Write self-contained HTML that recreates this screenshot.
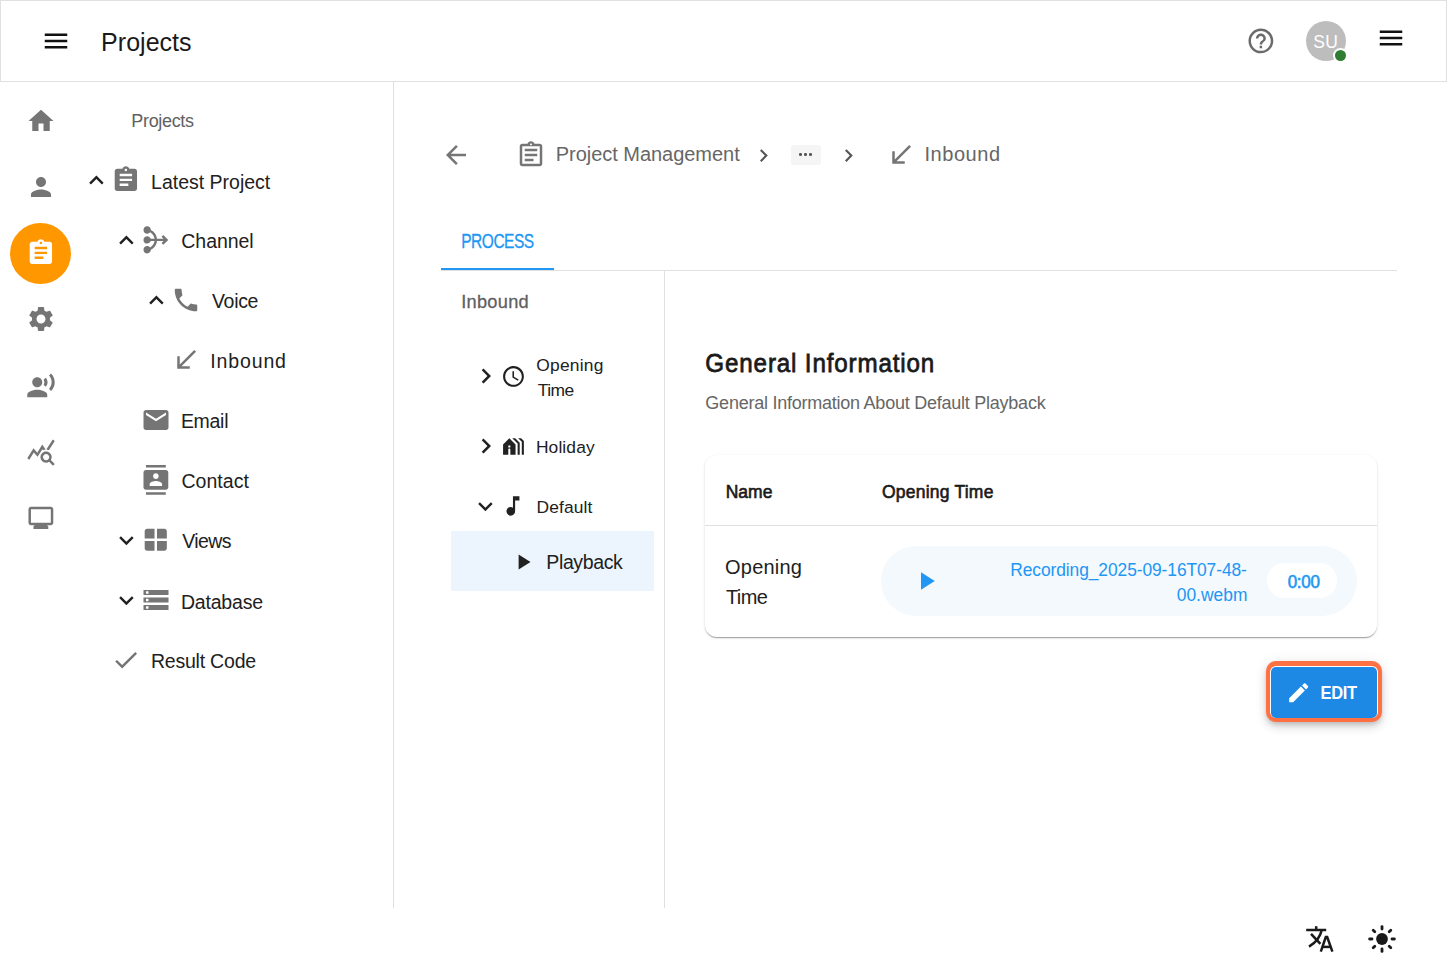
<!DOCTYPE html><html><head><meta charset="utf-8"><title>Projects</title><style>
html,body{margin:0;padding:0;background:#fff;}
body{width:1447px;height:970px;position:relative;overflow:hidden;font-family:"Liberation Sans", sans-serif;}
.t{position:absolute;line-height:1;white-space:nowrap;}
</style></head><body>
<div style="position:absolute;left:0;top:0;width:1447px;height:82px;box-sizing:border-box;border:1px solid #e0e0e0;background:#fff"></div>
<div style="position:absolute;left:393px;top:82px;width:1px;height:826px;background:#e0e0e0;"></div>
<div style="position:absolute;left:441px;top:270px;width:956px;height:1px;background:#e0e0e0;"></div>
<div style="position:absolute;left:441px;top:268px;width:113px;height:2px;background:#2196F3;"></div>
<div style="position:absolute;left:664px;top:271px;width:1px;height:637px;background:#e0e0e0;"></div>
<svg style="position:absolute;left:41.10px;top:25.90px;width:30.00px;height:30.00px" viewBox="0 0 24 24"><path fill="#111" d="M3 18h18v-2H3v2zm0-5h18v-2H3v2zm0-7v2h18V6H3z"/></svg>
<svg style="position:absolute;left:1246.02px;top:26.02px;width:29.76px;height:29.76px" viewBox="0 0 24 24"><path fill="#6b6b6b" d="M11 18h2v-2h-2v2zm1-16C6.48 2 2 6.48 2 12s4.48 10 10 10 10-4.48 10-10S17.52 2 12 2zm0 18c-4.41 0-8-3.59-8-8s3.59-8 8-8 8 3.59 8 8-3.59 8-8 8zm0-14c-2.21 0-4 1.79-4 4h2c0-1.1.9-2 2-2s2 .9 2 2c0 2-3 1.75-3 5h2c0-2.25 3-2.5 3-5 0-2.21-1.79-4-4-4z"/></svg>
<div style="position:absolute;left:1306px;top:21px;width:40px;height:40px;border-radius:50%;background:#bdbdbd"></div>
<div style="position:absolute;left:1332.5px;top:47.8px;width:15px;height:15px;border-radius:50%;background:#fff"></div>
<div style="position:absolute;left:1334.5px;top:49.8px;width:11px;height:11px;border-radius:50%;background:#2e7d32"></div>
<svg style="position:absolute;left:1376.10px;top:22.90px;width:30.00px;height:30.00px" viewBox="0 0 24 24"><path fill="#111" d="M3 18h18v-2H3v2zm0-5h18v-2H3v2zm0-7v2h18V6H3z"/></svg>
<svg style="position:absolute;left:26.00px;top:105.80px;width:30.00px;height:30.00px" viewBox="0 0 24 24"><path fill="#757575" d="M10 20v-6h4v6h5v-8h3L12 3 2 12h3v8z"/></svg>
<svg style="position:absolute;left:26.00px;top:171.90px;width:30.00px;height:30.00px" viewBox="0 0 24 24"><path fill="#757575" d="M12 12c2.21 0 4-1.79 4-4s-1.79-4-4-4-4 1.79-4 4 1.79 4 4 4zm0 2c-2.67 0-8 1.34-8 4v2h16v-2c0-2.66-5.33-4-8-4z"/></svg>
<div style="position:absolute;left:9.9px;top:222.9px;width:61px;height:61px;border-radius:50%;background:#FF9800"></div>
<svg style="position:absolute;left:26.12px;top:238.12px;width:29.76px;height:29.76px" viewBox="0 0 24 24"><path fill="#fff" d="M19 3h-4.18C14.4 1.84 13.3 1 12 1c-1.3 0-2.4.84-2.82 2H5c-1.1 0-2 .9-2 2v14c0 1.1.9 2 2 2h14c1.1 0 2-.9 2-2V5c0-1.1-.9-2-2-2zm-7 0c.55 0 1 .45 1 1s-.45 1-1 1-1-.45-1-1 .45-1 1-1zm2 14H7v-2h7v2zm3-4H7v-2h10v2zm0-4H7V7h10v2z"/></svg>
<svg style="position:absolute;left:26.00px;top:303.80px;width:30.00px;height:30.00px" viewBox="0 0 24 24"><path fill="#757575" d="M19.14 12.94c.04-.3.06-.61.06-.94 0-.32-.02-.64-.07-.94l2.03-1.58c.18-.14.23-.41.12-.61l-1.92-3.32c-.12-.22-.37-.29-.59-.22l-2.39.96c-.5-.38-1.03-.7-1.62-.94l-.36-2.54c-.04-.24-.24-.41-.48-.41h-3.84c-.24 0-.43.17-.47.41l-.36 2.54c-.59.24-1.13.57-1.62.94l-2.39-.96c-.22-.08-.47 0-.59.22L2.74 8.87c-.12.21-.08.47.12.61l2.03 1.58c-.05.3-.09.63-.09.94s.02.64.07.94l-2.03 1.58c-.18.14-.23.41-.12.61l1.920 3.32c.12.22.37.29.59.22l2.39-.96c.5.38 1.03.7 1.62.94l.36 2.54c.05.24.24.41.48.41h3.84c.24 0 .44-.17.47-.41l.36-2.54c.59-.24 1.13-.56 1.62-.94l2.39.96c.22.08.47 0 .59-.22l1.92-3.32c.12-.22.07-.47-.12-.61l-2.01-1.58zM12 15.6c-1.98 0-3.6-1.62-3.6-3.6s1.62-3.6 3.6-3.6 3.6 1.62 3.6 3.6-1.62 3.6-3.6 3.6z"/></svg>
<svg style="position:absolute;left:25.90px;top:371.40px;width:30.00px;height:30.00px" viewBox="0 0 24 24"><path fill="#757575" d="M9 13c2.21 0 4-1.79 4-4s-1.79-4-4-4-4 1.79-4 4 1.79 4 4 4zm0 2c-2.67 0-8 1.34-8 4v2h16v-2c0-2.66-5.33-4-8-4zm6.76-9.64l-1.68 1.69c.84 1.18.84 2.71 0 3.89l1.68 1.69c2.02-2.02 2.02-5.07 0-7.27zM20.07 2l-1.63 1.63c2.77 3.02 2.77 7.56 0 10.74L20.07 16c3.9-3.89 3.91-9.95 0-14z"/></svg>
<svg style="position:absolute;left:26.00px;top:436.90px;width:30.00px;height:30.00px" viewBox="0 0 24 24"><path fill="#757575" d="M19.88 18.47c.44-.7.7-1.51.7-2.39 0-2.49-2.01-4.5-4.5-4.5s-4.5 2.01-4.5 4.5 2.01 4.5 4.49 4.5c.88 0 1.7-.26 2.39-.7L21.58 23 23 21.58l-3.12-3.11zm-3.8.11c-1.38 0-2.5-1.12-2.5-2.5s1.12-2.5 2.5-2.5 2.5 1.12 2.5 2.5-1.12 2.5-2.5 2.5zm-.36-8.5c-.74.02-1.45.18-2.1.45l-.55-.83-3.8 6.18-3.01-3.52-3.630 5.81L1 17l5-8 3 3.5L13 6l2.72 4.08zm2.59.5c-.64-.28-1.33-.45-2.05-.49L21.38 2 23 3.18l-4.69 7.4z"/></svg>
<svg style="position:absolute;left:26.12px;top:502.92px;width:29.76px;height:29.76px" viewBox="0 0 24 24"><path fill="#757575" d="M20 3H4c-1.1 0-2 .9-2 2v11c0 1.1.9 2 2 2h3l-1 1v2h12v-2l-1-1h3c1.1 0 2-.9 2-2V5c0-1.1-.9-2-2-2zm0 13H4V5h16v11z"/></svg>
<svg style="position:absolute;left:81.50px;top:165.80px;width:28.80px;height:28.80px" viewBox="0 0 24 24"><path fill="#212121" d="M12 8l-6 6 1.41 1.41L12 10.83l4.59 4.58L18 14z"/></svg>
<svg style="position:absolute;left:111.02px;top:165.22px;width:29.76px;height:29.76px" viewBox="0 0 24 24"><path fill="#757575" d="M19 3h-4.18C14.4 1.84 13.3 1 12 1c-1.3 0-2.4.84-2.82 2H5c-1.1 0-2 .9-2 2v14c0 1.1.9 2 2 2h14c1.1 0 2-.9 2-2V5c0-1.1-.9-2-2-2zm-7 0c.55 0 1 .45 1 1s-.45 1-1 1-1-.45-1-1 .45-1 1-1zm2 14H7v-2h7v2zm3-4H7v-2h10v2zm0-4H7V7h10v2z"/></svg>
<svg style="position:absolute;left:111.60px;top:225.80px;width:28.80px;height:28.80px" viewBox="0 0 24 24"><path fill="#212121" d="M12 8l-6 6 1.41 1.41L12 10.83l4.59 4.58L18 14z"/></svg>
<svg style="position:absolute;left:140.87px;top:225.32px;width:29.76px;height:29.76px" viewBox="0 0 24 24"><path fill="#757575" d="M22 12l-4 4-1.41-1.41L18.17 13h-5.23c-.34 3.1-2.26 5.72-4.94 7.05C7.96 21.69 6.64 23 5 23c-1.66 0-3-1.34-3-3s1.34-3 3-3c.95 0 1.78.45 2.33 1.14 1.9-1.03 3.26-2.91 3.58-5.14h-3.1C7.4 14.16 6.3 15 5 15c-1.66 0-3-1.34-3-3s1.34-3 3-3c1.3 0 2.4.84 2.82 2h3.1c-.32-2.23-1.69-4.1-3.59-5.14C6.78 6.55 5.95 7 5 7 3.34 7 2 5.66 2 4s1.34-3 3-3c1.64 0 2.96 1.31 2.99 2.95 2.68 1.33 4.6 3.95 4.94 7.05h5.23l-1.58-1.59L18 8l4 4z"/></svg>
<svg style="position:absolute;left:141.60px;top:285.80px;width:28.80px;height:28.80px" viewBox="0 0 24 24"><path fill="#212121" d="M12 8l-6 6 1.41 1.41L12 10.83l4.59 4.58L18 14z"/></svg>
<svg style="position:absolute;left:171.00px;top:284.90px;width:30.00px;height:30.00px" viewBox="0 0 24 24"><path fill="#757575" d="M6.62 10.79c1.44 2.83 3.76 5.14 6.59 6.59l2.2-2.2c.27-.27.67-.36 1.02-.24 1.12.37 2.33.57 3.57.57.55 0 1 .45 1 1V20c0 .55-.45 1-1 1-9.39 0-17-7.61-17-17 0-.55.45-1 1-1h3.5c.55 0 1 .45 1 1 0 1.25.2 2.450.57 3.57.11.35.03.74-.25 1.02l-2.2 2.2z"/></svg>
<svg style="position:absolute;left:170.60px;top:345.40px;width:30.00px;height:30.00px" viewBox="0 0 24 24"><path fill="#757575" d="M20 5.41L18.59 4 7 15.59V9H5v10h10v-2H8.41z"/></svg>
<svg style="position:absolute;left:140.90px;top:404.90px;width:30.00px;height:30.00px" viewBox="0 0 24 24"><path fill="#757575" d="M20 4H4c-1.1 0-1.99.9-1.99 2L2 18c0 1.1.9 2 2 2h16c1.1 0 2-.9 2-2V6c0-1.1-.9-2-2-2zm0 4l-8 5-8-5V6l8 5 8-5v2z"/></svg>
<svg style="position:absolute;left:140.87px;top:465.02px;width:29.76px;height:29.76px" viewBox="0 0 24 24"><path fill="#757575" d="M20 0H4v2h16V0zM4 24h16v-2H4v2zM20 4H4c-1.1 0-2 .9-2 2v12c0 1.1.9 2 2 2h16c1.1 0 2-.9 2-2V6c0-1.1-.9-2-2-2zm-8 2.75c1.24 0 2.25 1.01 2.25 2.25s-1.01 2.25-2.25 2.25S9.75 10.24 9.75 9 10.76 6.75 12 6.75zM17 17H7v-1.5c0-1.67 3.33-2.5 5-2.5s5 .83 5 2.5V17z"/></svg>
<svg style="position:absolute;left:111.60px;top:526.00px;width:28.80px;height:28.80px" viewBox="0 0 24 24"><path fill="#212121" d="M16.59 8.59L12 13.17 7.41 8.59 6 10l6 6 6-6z"/></svg>
<svg style="position:absolute;left:141.24px;top:525.24px;width:29.52px;height:29.52px" viewBox="0 0 24 24"><path fill="#757575" d="M11 11V3H5c-1.1 0-2 .9-2 2v6h8zm2 0h8V5c0-1.1-.9-2-2-2h-6v8zm-2 2H3v6c0 1.1.9 2 2 2h6v-8zm2 0v8h6c1.1 0 2-.9 2-2v-6h-8z"/></svg>
<svg style="position:absolute;left:111.60px;top:586.00px;width:28.80px;height:28.80px" viewBox="0 0 24 24"><path fill="#212121" d="M16.59 8.59L12 13.17 7.41 8.59 6 10l6 6 6-6z"/></svg>
<svg style="position:absolute;left:140.90px;top:584.85px;width:30.00px;height:30.00px" viewBox="0 0 24 24"><path fill="#757575" d="M2 20h20v-4H2v4zm2-3h2v2H4v-2zM2 4v4h20V4H2zm4 3H4V5h2v2zM2 14h20v-4H2v4zm2-3h2v2H4v-2z"/></svg>
<svg style="position:absolute;left:111.02px;top:645.12px;width:29.76px;height:29.76px" viewBox="0 0 24 24"><path fill="#757575" d="M9 16.17L4.83 12l-1.42 1.41L9 19 21 7l-1.41-1.41z"/></svg>
<svg style="position:absolute;left:441.00px;top:140.00px;width:30.00px;height:30.00px" viewBox="0 0 24 24"><path fill="#757575" d="M20 11H7.83l5.59-5.59L12 4l-8 8 8 8 1.41-1.41L7.83 13H20v-2z"/></svg>
<svg style="position:absolute;left:515.90px;top:140.00px;width:30.00px;height:30.00px" viewBox="0 0 24 24"><path fill="#757575" d="M7 15h7v2H7zm0-4h10v2H7zm0-4h10v2H7zm12-4h-4.18C14.4 1.84 13.3 1 12 1c-1.3 0-2.4.84-2.82 2H5c-1.1 0-2 .9-2 2v14c0 1.1.9 2 2 2h14c1.1 0 2-.9 2-2V5c0-1.1-.9-2-2-2zm-7-.25c.41 0 .75.34.75.75s-.34.75-.75.75-.75-.34-.75-.75.34-.75.75-.75zM19 19H5V5h14v14z"/></svg>
<svg style="position:absolute;left:750.90px;top:143.30px;width:25.20px;height:25.20px" viewBox="0 0 24 24"><path fill="#555" d="M10 6L8.59 7.41 13.17 12l-4.58 4.59L10 18l6-6z"/></svg>
<div style="position:absolute;left:791px;top:145px;width:30px;height:20px;border-radius:3px;background:#f5f5f5"></div>
<div style="position:absolute;left:799.25px;top:153.3px;width:2.6px;height:2.6px;border-radius:50%;background:#555"></div>
<div style="position:absolute;left:804.25px;top:153.3px;width:2.6px;height:2.6px;border-radius:50%;background:#555"></div>
<div style="position:absolute;left:809.25px;top:153.3px;width:2.6px;height:2.6px;border-radius:50%;background:#555"></div>
<svg style="position:absolute;left:835.50px;top:143.30px;width:25.20px;height:25.20px" viewBox="0 0 24 24"><path fill="#555" d="M10 6L8.59 7.41 13.17 12l-4.58 4.59L10 18l6-6z"/></svg>
<svg style="position:absolute;left:885.60px;top:140.30px;width:30.00px;height:30.00px" viewBox="0 0 24 24"><path fill="#757575" d="M20 5.41L18.59 4 7 15.59V9H5v10h10v-2H8.41z"/></svg>
<div style="position:absolute;left:451px;top:531px;width:203px;height:60px;background:#ECF5FD;"></div>
<svg style="position:absolute;left:471.10px;top:360.60px;width:30.00px;height:30.00px" viewBox="0 0 24 24"><path fill="#212121" d="M10 6L8.59 7.41 13.17 12l-4.58 4.59L10 18l6-6z"/></svg>
<svg style="position:absolute;left:501.02px;top:363.87px;width:24.96px;height:24.96px" viewBox="0 0 24 24"><path fill="#212121" d="M11.99 2C6.47 2 2 6.48 2 12s4.47 10 9.99 10C17.52 22 22 17.52 22 12S17.52 2 11.99 2zM12 20c-4.42 0-8-3.58-8-8s3.58-8 8-8 8 3.58 8 8-3.58 8-8 8zm.5-13H11v6l5.25 3.15.75-1.23-4.5-2.67z"/></svg>
<svg style="position:absolute;left:471.10px;top:431.00px;width:30.00px;height:30.00px" viewBox="0 0 24 24"><path fill="#212121" d="M10 6L8.59 7.41 13.17 12l-4.58 4.59L10 18l6-6z"/></svg>
<svg style="position:absolute;left:501.02px;top:433.92px;width:24.96px;height:24.96px" viewBox="0 0 24 24"><path fill="#212121" d="M8 4l-6 6v10h5v-5c0-.55.45-1 1-1s1 .45 1 1v5h5V10L8 4zm1 9H7v-2h2v2zm9 7V8.35L13.65 4h-2.83L16 9.18V20h2zm4 0V6.69L19.31 4h-2.83L20 7.52V20h2z"/></svg>
<svg style="position:absolute;left:471.35px;top:491.60px;width:28.80px;height:28.80px" viewBox="0 0 24 24"><path fill="#212121" d="M16.59 8.59L12 13.17 7.41 8.59 6 10l6 6 6-6z"/></svg>
<svg style="position:absolute;left:500.34px;top:493.44px;width:25.92px;height:25.92px" viewBox="0 0 24 24"><path fill="#212121" d="M12 3v10.55c-.59-.34-1.27-.55-2-.55-2.21 0-4 1.79-4 4s1.79 4 4 4 4-1.79 4-4V7h4V3h-6z"/></svg>
<svg style="position:absolute;left:510.34px;top:548.54px;width:25.92px;height:25.92px" viewBox="0 0 24 24"><path fill="#212121" d="M8 5v14l11-7z"/></svg>
<div style="position:absolute;left:705px;top:455px;width:672px;height:182px;border-radius:12px;background:#fff;box-shadow:0px 2px 1px -1px rgba(0,0,0,0.2),0px 1px 1px 0px rgba(0,0,0,0.14),0px 1px 3px 0px rgba(0,0,0,0.12)"></div>
<div style="position:absolute;left:705px;top:525px;width:672px;height:1px;background:#e0e0e0;"></div>
<div style="position:absolute;left:881px;top:546px;width:476px;height:70px;border-radius:35px;background:#F4F9FD"></div>
<svg style="position:absolute;left:911.00px;top:565.95px;width:30.00px;height:30.00px" viewBox="0 0 24 24"><path fill="#2196F3" d="M8 5v14l11-7z"/></svg>
<div style="position:absolute;left:1267px;top:563.3px;width:70px;height:34.3px;border-radius:17px;background:#fff"></div>
<div style="position:absolute;left:1266px;top:661px;width:116px;height:61px;box-sizing:border-box;border-radius:10px;background:#FF7043;box-shadow:0px 3px 5px -1px rgba(0,0,0,0.16),0px 6px 10px 0px rgba(0,0,0,0.10),0px 1px 14px 0px rgba(0,0,0,0.08)"></div>
<div style="position:absolute;left:1270px;top:666px;width:108px;height:52px;border-radius:6px;background:#fff"></div>
<div style="position:absolute;left:1271px;top:667px;width:106px;height:50.5px;border-radius:5px;background:#1E88E5"></div>
<svg style="position:absolute;left:1285.68px;top:679.68px;width:25.44px;height:25.44px" viewBox="0 0 24 24"><path fill="#fff" d="M3 17.25V21h3.75L17.81 9.94l-3.75-3.75L3 17.25zM20.71 7.04c.39-.39.39-1.02 0-1.41l-2.34-2.34c-.39-.39-1.02-.39-1.41 0l-1.83 1.83 3.75 3.75 1.83-1.83z"/></svg>
<svg style="position:absolute;left:1304px;top:924px;width:32px;height:30px" viewBox="0 0 32 30">
<g fill="none" stroke="#1a1a1a" stroke-width="2.5" stroke-linecap="butt" stroke-linejoin="miter">
<path d="M2.2 6h20"/><path d="M12.2 2.2v3.8"/>
<path d="M17.6 6.2C16.6 11.5 12.5 18 5 22.6"/>
<path d="M7 9.9l9.4 10"/>
<path d="M16.8 27.6l5-14.6h1.4l5.2 14.6"/><path d="M18.6 22.9h8.2"/>
</g></svg>
<svg style="position:absolute;left:1366px;top:923px;width:32px;height:32px" viewBox="0 0 32 32">
<circle cx="16" cy="16" r="5.9" fill="#1a1a1a"/>
<g stroke="#1a1a1a" stroke-width="2.8" stroke-linecap="round">
<path d="M16 3.6v2.4"/><path d="M16 26v2.4"/><path d="M3.6 16h2.4"/><path d="M26 16h2.4"/>
<path d="M7.2 7.2l1.6 1.6"/><path d="M23.2 23.2l1.6 1.6"/><path d="M7.2 24.8l1.6-1.6"/><path d="M23.2 8.8l1.6-1.6"/>
</g></svg>
<div class="t" style="left:101.08px;top:30.46px;font-size:25px;font-weight:400;letter-spacing:0.025px;color:#1a1a1a;">Projects</div>
<div class="t" style="left:131.36px;top:111.88px;font-size:18px;font-weight:400;letter-spacing:-0.337px;color:#616161;transform:scaleY(1.06);transform-origin:0 15px;">Projects</div>
<div class="t" style="left:151.08px;top:172.76px;font-size:19.5px;font-weight:400;letter-spacing:-0.006px;color:#212121;">Latest Project</div>
<div class="t" style="left:181.36px;top:231.9px;font-size:19.5px;font-weight:400;letter-spacing:-0.077px;color:#212121;">Channel</div>
<div class="t" style="left:212.0px;top:292.26px;font-size:19.5px;font-weight:400;letter-spacing:-0.315px;color:#212121;">Voice</div>
<div class="t" style="left:210.36px;top:351.9px;font-size:19.5px;font-weight:400;letter-spacing:0.847px;color:#212121;">Inbound</div>
<div class="t" style="left:180.9px;top:412.26px;font-size:19.5px;font-weight:400;letter-spacing:-0.295px;color:#212121;">Email</div>
<div class="t" style="left:181.44px;top:472.14px;font-size:19.5px;font-weight:400;letter-spacing:0.05px;color:#212121;">Contact</div>
<div class="t" style="left:182.36px;top:532.2px;font-size:19.5px;font-weight:400;letter-spacing:-0.655px;color:#212121;">Views</div>
<div class="t" style="left:180.9px;top:592.56px;font-size:19.5px;font-weight:400;letter-spacing:-0.18px;color:#212121;">Database</div>
<div class="t" style="left:150.9px;top:652.38px;font-size:19.5px;font-weight:400;letter-spacing:-0.208px;color:#212121;">Result Code</div>
<div class="t" style="left:555.8px;top:144.02px;font-size:20px;font-weight:400;letter-spacing:-0.036px;color:#666666;">Project Management</div>
<div class="t" style="left:924.54px;top:143.74px;font-size:20px;font-weight:400;letter-spacing:0.534px;color:#666666;">Inbound</div>
<div class="t" style="left:461.28px;top:234.52px;font-size:15.5px;font-weight:400;letter-spacing:-0.484px;color:#2196F3;-webkit-text-stroke:0.25px #2196F3;transform:scaleY(1.25);transform-origin:0 13px;">PROCESS</div>
<div class="t" style="left:461.18px;top:292.64px;font-size:18.2px;font-weight:400;letter-spacing:0.304px;color:#5f5f5f;-webkit-text-stroke:0.3px #5f5f5f;">Inbound</div>
<div class="t" style="left:536.26px;top:356.52px;font-size:17.4px;font-weight:400;letter-spacing:0.243px;color:#212121;">Opening</div>
<div class="t" style="left:537.72px;top:381.7px;font-size:17.4px;font-weight:400;letter-spacing:-0.48px;color:#212121;">Time</div>
<div class="t" style="left:535.92px;top:438.76px;font-size:17.4px;font-weight:400;letter-spacing:0.12px;color:#212121;">Holiday</div>
<div class="t" style="left:536.54px;top:499.12px;font-size:17.4px;font-weight:400;letter-spacing:0.106px;color:#212121;">Default</div>
<div class="t" style="left:546.34px;top:553.12px;font-size:19.5px;font-weight:400;letter-spacing:-0.385px;color:#212121;">Playback</div>
<div class="t" style="left:705.36px;top:352.24px;font-size:24.2px;font-weight:400;letter-spacing:0.843px;color:#1a1a1a;-webkit-text-stroke:0.7px #1a1a1a;transform:scaleY(1.09);transform-origin:0 20px;">General Information</div>
<div class="t" style="left:705.36px;top:394.42px;font-size:18px;font-weight:400;letter-spacing:-0.242px;color:#666666;transform:scaleY(1.04);transform-origin:0 15px;">General Information About Default Playback</div>
<div class="t" style="left:725.72px;top:484.24px;font-size:17.5px;font-weight:400;letter-spacing:0.0px;color:#1a1a1a;-webkit-text-stroke:0.6px #1a1a1a;transform:scaleY(1.08);transform-origin:0 14px;">Name</div>
<div class="t" style="left:882.0px;top:484.24px;font-size:17.5px;font-weight:400;letter-spacing:0.223px;color:#1a1a1a;-webkit-text-stroke:0.6px #1a1a1a;transform:scaleY(1.08);transform-origin:0 14px;">Opening Time</div>
<div class="t" style="left:725.0px;top:557.4px;font-size:20px;font-weight:400;letter-spacing:0.227px;color:#212121;">Opening</div>
<div class="t" style="left:725.92px;top:587.34px;font-size:20px;font-weight:400;letter-spacing:-0.547px;color:#212121;">Time</div>
<div class="t" style="left:1010.28px;top:562.48px;font-size:17.4px;font-weight:400;letter-spacing:-0.084px;color:#2196F3;transform:scaleY(1.08);transform-origin:0 14px;">Recording_2025-09-16T07-48-</div>
<div class="t" style="left:1176.72px;top:587.2px;font-size:17.4px;font-weight:400;letter-spacing:0.03px;color:#2196F3;transform:scaleY(1.08);transform-origin:0 14px;">00.webm</div>
<div class="t" style="left:1287.7px;top:573.9px;font-size:17px;font-weight:400;letter-spacing:-0.3px;color:#2196F3;-webkit-text-stroke:0.55px #2196F3;transform:scaleY(1.06);transform-origin:0 14px;">0:00</div>
<div class="t" style="left:1320.46px;top:685.08px;font-size:16.5px;font-weight:700;letter-spacing:-0.307px;color:#ffffff;transform:scaleY(1.11);transform-origin:0 14px;">EDIT</div>
<div class="t" style="left:1313.28px;top:34.3px;font-size:17.5px;font-weight:400;letter-spacing:0.2px;color:#ffffff;transform:scaleY(1.08);transform-origin:0 14px;">SU</div>
</body></html>
